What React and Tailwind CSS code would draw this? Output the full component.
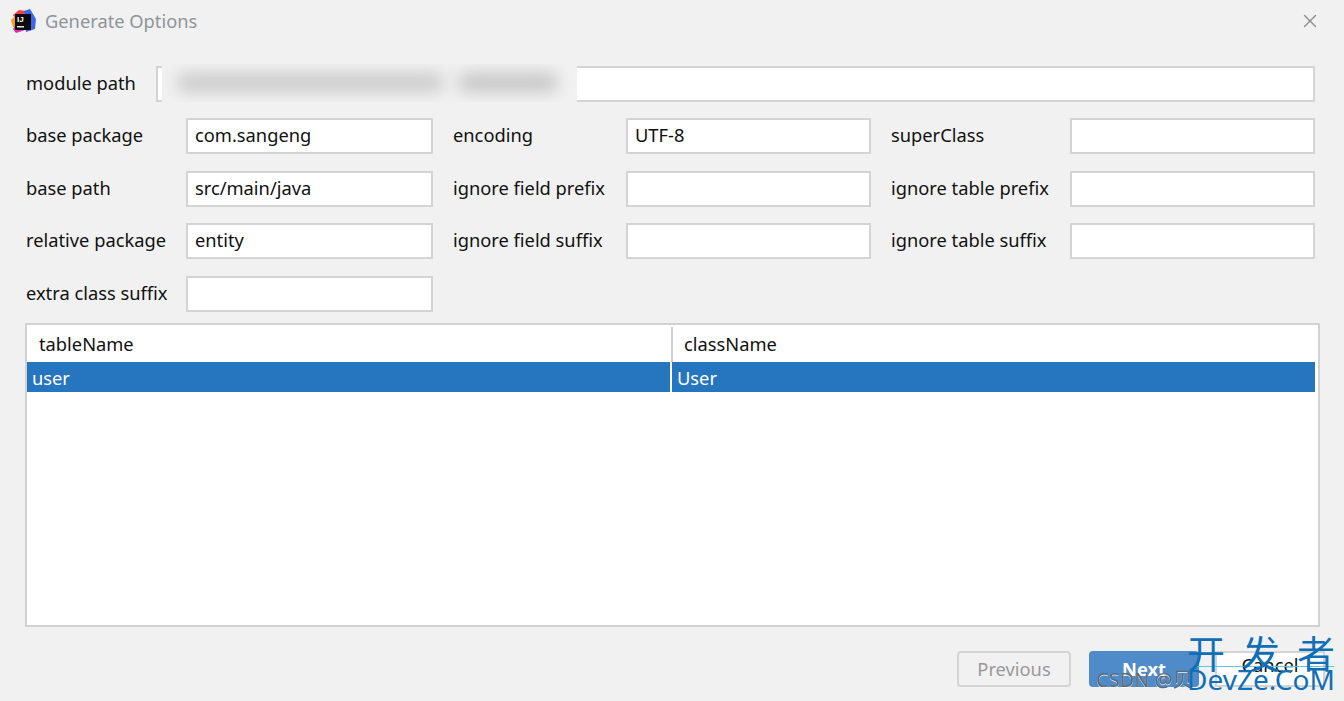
import React from "react";
import { X } from "lucide-react";

const rows = [
  [
    { label: "base package", value: "com.sangeng" },
    { label: "encoding", value: "UTF-8" },
    { label: "superClass", value: "" },
  ],
  [
    { label: "base path", value: "src/main/java" },
    { label: "ignore field prefix", value: "" },
    { label: "ignore table prefix", value: "" },
  ],
  [
    { label: "relative package", value: "entity" },
    { label: "ignore field suffix", value: "" },
    { label: "ignore table suffix", value: "" },
  ],
  [{ label: "extra class suffix", value: "" }],
];

const Field = ({ value }) => (
  <div className="flex h-[36px] items-center border-2 border-[#d4d4d4] bg-white px-[7px] pb-[2px] text-[#111]">
    {value}
  </div>
);

const Logo = () => (
  <svg width="27" height="27" viewBox="0 0 27 27" className="shrink-0">
    <path d="M3 7 L9 2 L16 3 L8 15 Z" fill="#fb3f4d" />
    <path d="M1 12 L6 7 L7 19 L3 19 Z" fill="#ff9a17" />
    <path d="M3 21 L7 15 L15 22 L6 25 Z" fill="#dc2ba6" />
    <path d="M14 3 L20 1 L26 11 L25 21 L16 24 Z" fill="#3c66ea" />
    <rect x="5" y="6" width="16" height="16" fill="#0b0b0b" />
    <text x="7" y="14" fill="#fff" fontSize="8" fontWeight="700" fontFamily="Liberation Sans, sans-serif">IJ</text>
    <rect x="7" y="18" width="7" height="1.5" fill="#e8e8e8" />
  </svg>
);

export default function App() {
  return (
    <div className="relative h-[701px] w-[1344px] overflow-hidden bg-[#f1f1f1] font-['Noto_Sans',sans-serif] text-[18.3px] leading-[24px] text-[#111]">
      <div className="flex h-[42px] items-center pl-[10px] pr-[23px]">
        <Logo />
        <span className="ml-[8px] text-[#8f9499]">Generate Options</span>
        <X className="ml-auto text-[#8c8c8c]" size={22} strokeWidth={1.5} />
      </div>

      <div className="mt-[24px] flex h-[36px] pl-[26px] pr-[29px]">
        <div className="flex w-[130px] items-center pb-[2px]">module path</div>
        <div className="relative flex-1 border-2 border-[#d4d4d4] bg-white">
          <div className="absolute left-[4px] top-[-4px] h-[38px] w-[415px] overflow-hidden bg-[#f1f1f1]">
            <div className="absolute left-[14px] top-[9px] h-[19px] w-[268px] rounded-full bg-[#cbcbcb] blur-[8px]" />
            <div className="absolute left-[296px] top-[9px] h-[19px] w-[100px] rounded-full bg-[#c6c6c6] blur-[8px]" />
          </div>
        </div>
      </div>

      <div className="mt-[16px] flex flex-col gap-[16.6px] pl-[26px] pr-[29px]">
        {rows.map((row) => (
          <div key={row[0].label} className="grid grid-cols-[160px_247px_20px_173px_245px_20px_179px_245px] items-center">
            {row.map((f, i) => (
              <React.Fragment key={f.label}>
                {i > 0 && <div />}
                <div className="pb-[2px]">{f.label}</div>
                <Field value={f.value} />
              </React.Fragment>
            ))}
          </div>
        ))}
      </div>

      <div className="ml-[25px] mt-[11px] h-[304px] w-[1295px] border-2 border-[#d2d2d2] bg-white pr-[3px]">
        <div className="flex h-[37px] pt-[2px]">
          <div className="flex w-[646px] items-center border-r-2 border-[#d2d2d2] pl-[12px]">tableName</div>
          <div className="flex flex-1 items-center pl-[11px]">className</div>
        </div>
        <div className="flex h-[30px] bg-[#2675bf] text-white">
          <div className="flex w-[643px] items-center pl-[5px] pt-[2px]">user</div>
          <div className="flex flex-1 items-center border-l-2 border-white pl-[5px] pt-[2px]">User</div>
        </div>
      </div>

      <div className="mt-[24px] flex pl-[957px]">
        <div className="flex h-[36px] w-[114px] items-center justify-center rounded-[4px] border-2 border-[#d4d4d4] text-[#999]">Previous</div>
        <div className="ml-[18px] flex h-[36px] w-[110px] items-center justify-center rounded-[4px] bg-[#4f8ac9] font-bold text-white">Next</div>
        <div className="ml-[16px] flex h-[36px] w-[110px] items-center justify-center border-2 border-[#d4d4d4] bg-white pb-[8px]">Cancel</div>
      </div>

      <div className="absolute left-[1197px] top-[666px] h-[1px] w-[137px] bg-[#5fc4e8]" />
      <div className="absolute left-[1096px] top-[668px] whitespace-nowrap font-['Noto_Sans','Noto_Sans_CJK_SC',sans-serif] text-[20px] leading-[24px] text-[#5f6a75] drop-shadow-[0_1px_0_rgba(255,255,255,0.7)]">CSDN @贝</div>
      <div className="absolute left-[1187px] top-[630px] whitespace-nowrap font-['Noto_Sans_CJK_SC',sans-serif] text-[38px] leading-[44px] tracking-[17px] text-[#0f6fb8]">开发者</div>
      <div className="absolute left-[1187px] top-[663px] whitespace-nowrap text-[28px] leading-[32px] text-[#0f6fb8]">DevZe.CoM</div>
    </div>
  );
}
